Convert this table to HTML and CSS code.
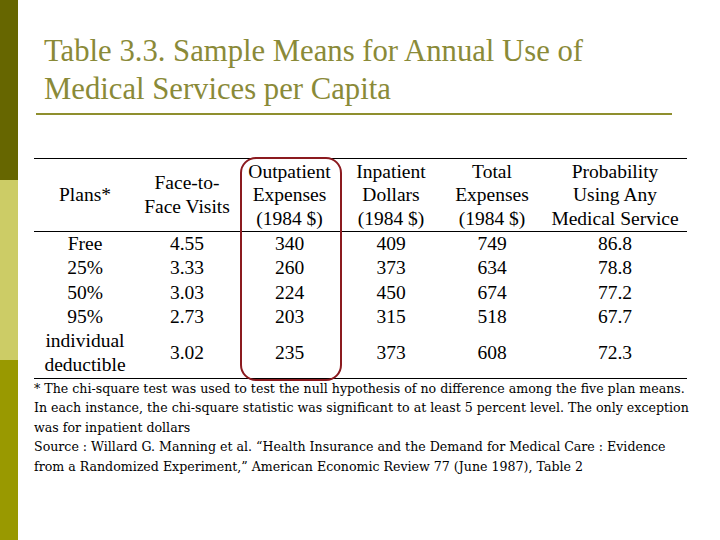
FILE: index.html
```html
<!DOCTYPE html>
<html>
<head>
<meta charset="utf-8">
<link rel="stylesheet" href="styles.css">
</head>
<body>
<div class="page">
  <div class="sidebar">
    <div class="seg seg-dark"></div>
    <div class="seg seg-light"></div>
    <div class="seg seg-mid"></div>
  </div>
  <div class="main">
    <h1 class="title">Table 3.3. Sample Means for Annual Use of<br>Medical Services per Capita</h1>
    <div class="rule"></div>
    <div class="table">
      <div class="row thead">
        <div class="cell">Plans*</div>
        <div class="cell">Face-to-<br>Face Visits</div>
        <div class="cell">Outpatient<br>Expenses<br>(1984 $)</div>
        <div class="cell">Inpatient<br>Dollars<br>(1984 $)</div>
        <div class="cell">Total<br>Expenses<br>(1984 $)</div>
        <div class="cell">Probability<br>Using Any<br>Medical Service</div>
      </div>
      <div class="tbody">
        <div class="row"><div class="cell">Free</div><div class="cell">4.55</div><div class="cell">340</div><div class="cell">409</div><div class="cell">749</div><div class="cell">86.8</div></div>
        <div class="row"><div class="cell">25%</div><div class="cell">3.33</div><div class="cell">260</div><div class="cell">373</div><div class="cell">634</div><div class="cell">78.8</div></div>
        <div class="row"><div class="cell">50%</div><div class="cell">3.03</div><div class="cell">224</div><div class="cell">450</div><div class="cell">674</div><div class="cell">77.2</div></div>
        <div class="row"><div class="cell">95%</div><div class="cell">2.73</div><div class="cell">203</div><div class="cell">315</div><div class="cell">518</div><div class="cell">67.7</div></div>
        <div class="row"><div class="cell">individual<br>deductible</div><div class="cell">3.02</div><div class="cell">235</div><div class="cell">373</div><div class="cell">608</div><div class="cell">72.3</div></div>
      </div>
      <div class="highlight"></div>
    </div>
    <p class="note">* The chi-square test was used to test the null hypothesis of no difference among the five plan means.<br>In each instance, the chi-square statistic was significant to at least 5 percent level. The only exception<br>was for inpatient dollars<br>Source : Willard G. Manning et al. “Health Insurance and the Demand for Medical Care : Evidence<br>from a Randomized Experiment,” American Economic Review 77 (June 1987), Table 2</p>
  </div>
</div>
</body>
</html>
```

FILE: styles.css
```css
html, body {
  margin: 0;
  padding: 0;
  background: #ffffff;
}

.page {
  display: flex;
  width: 720px;
  height: 540px;
  overflow: hidden;
  font-family: "Liberation Serif", serif;
  color: #000;
}

.sidebar {
  width: 18px;
  display: flex;
  flex-direction: column;
  flex-shrink: 0;
}

.seg {
  height: 180px;
}

.seg-dark { background: #666600; }
.seg-light { background: #cccc66; }
.seg-mid { background: #999900; }

.main {
  flex: 1;
  padding-left: 16px;
}

.title {
  margin: 0;
  padding-top: 32px;
  padding-left: 10px;
  font-family: "Liberation Serif", serif;
  font-size: 30.7px;
  line-height: 38px;
  font-weight: normal;
  color: #8a8a38;
  white-space: nowrap;
}

.rule {
  margin-top: 5px;
  margin-left: 2px;
  width: 636px;
  height: 2px;
  background: #8f8f2e;
}

.table {
  position: relative;
  margin-top: 43px;
  width: 653px;
  font-family: "Liberation Serif", serif;
  font-size: 19.5px;
}

.row {
  display: grid;
  grid-template-columns: 102px 102px 103px 100px 102px 144px;
  line-height: 24.3px;
}

.cell {
  display: flex;
  flex-direction: column;
  justify-content: center;
  text-align: center;
  white-space: nowrap;
}

.thead {
  border-top: 1px solid #000;
  border-bottom: 1px solid #000;
  height: 72px;
  line-height: 23.6px;
}

.tbody {
  border-bottom: 1px solid #000;
}

.highlight {
  position: absolute;
  left: 206px;
  top: -1px;
  width: 98px;
  height: 220px;
  border: 2px solid #8b1a1f;
  border-radius: 16px;
}

.note {
  margin: 0;
  font-family: "DejaVu Serif", serif;
  font-size: 12.6px;
  line-height: 19.5px;
  white-space: nowrap;
}
```
